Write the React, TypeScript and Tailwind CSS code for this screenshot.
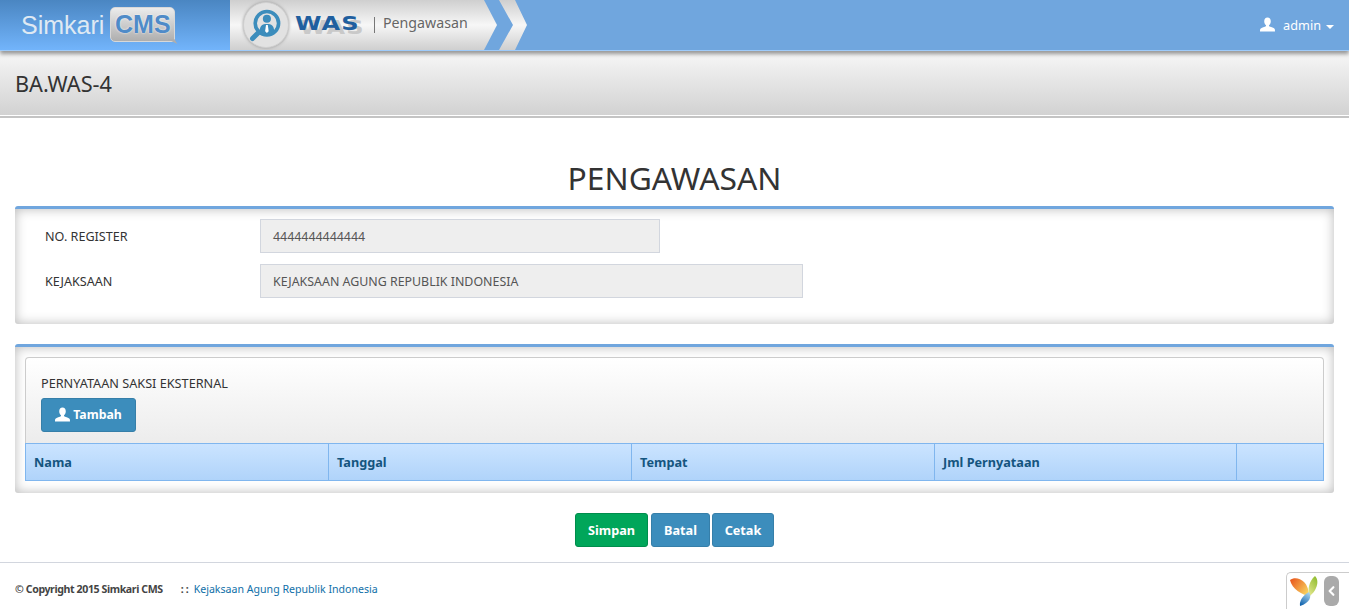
import { ChevronLeft } from 'lucide-react';

const sans = "font-['Noto_Sans','Open_Sans',sans-serif]";

function UserIcon({ className }: { className: string }) {
  return (
    <svg viewBox="0 0 16 16" className={className} fill="currentColor">
      <path d="M8 .5c2.200 0 3.500 1.600 3.500 3.900 0 1.700-.7 3.300-1.700 4.200-.3.3-.3.9 0 1.200.6.6 4.700 1.500 5.700 2.600.5.6.5 1.900.5 3.100H0c0-1.200 0-2.500.5-3.100 1-1.100 5.100-2 5.700-2.600.3-.3.3-.9 0-1.200-1-.9-1.700-2.500-1.700-4.200C4.500 2.100 5.800.5 8 .5z" />
    </svg>
  );
}

function WasBadge() {
  return (
    <div className="w-[46px] h-[46px] rounded-full bg-[#e2e2e2] border border-[#cfcfcf] shadow-[0_0_3px_#999] flex items-center justify-center ml-[13px]">
      <svg viewBox="0 0 40 40" className="w-[36px] h-[36px]">
        <circle cx="21" cy="18" r="13" fill="none" stroke="#3c8dbc" strokeWidth="4" />
        <path d="M12 28 5 35" stroke="#3c8dbc" strokeWidth="5.500" strokeLinecap="round" />
        <circle cx="21" cy="13" r="4.500" fill="#3c8dbc" />
        <path d="M13 27c0-6 3-8 8-8s8 2 8 8c-4 3-12 3-16 0z" fill="#3c8dbc" />
        <path d="M20 20h2l1 7-2 2-2-2z" fill="#fff" />
      </svg>
    </div>
  );
}

function YiiLogo() {
  return (
    <svg viewBox="0 0 28 30" className="w-[28px] h-[30px]">
      <defs>
        <linearGradient id="yo" x1="0" y1="0" x2="1" y2="0.7">
          <stop offset="0" stopColor="#e8501a" />
          <stop offset="1" stopColor="#f8d25e" />
        </linearGradient>
        <linearGradient id="yg" x1="0.8" y1="0" x2="0.2" y2="1">
          <stop offset="0" stopColor="#8fbc2e" />
          <stop offset="1" stopColor="#e2e68c" />
        </linearGradient>
        <linearGradient id="yb" x1="0.7" y1="0" x2="0.2" y2="1">
          <stop offset="0" stopColor="#a5d2ec" />
          <stop offset="1" stopColor="#0f62ad" />
        </linearGradient>
      </defs>
      <path d="M0 4c4-3 10-2 14 2 3 3 5 8 5 14C12 19 2 13 0 4z" fill="url(#yo)" />
      <path d="M25 0c3 3 3 8 1 12-1 3-4 6-6 8-3-6-1-15 5-20z" fill="url(#yg)" />
      <path d="M19 16c3 4 1 11-9 14-1-5 3-11 9-14z" fill="url(#yb)" />
    </svg>
  );
}

function Field({ label, value, inputWidth }: { label: string; value: string; inputWidth: string }) {
  return (
    <div className="flex items-center h-[34px]">
      <label className="w-[216px] pl-[1px] pt-[2px] text-[12.600px] text-[#333]">{label}</label>
      <div className={`${inputWidth} h-[34px] border border-[#d2d6de] bg-[#eee] px-3 pt-[2px] flex items-center text-[12.400px] text-[#555]`}>
        {value}
      </div>
    </div>
  );
}

function ActionButton({ label, className }: { label: string; className: string }) {
  return (
    <button className={`h-[34px] pt-[1px] rounded-[3px] border text-[12.700px] font-bold text-white ${className}`}>
      {label}
    </button>
  );
}

export default function App() {
  return (
    <div className={`${sans} h-[613px] overflow-hidden bg-white text-[#333]`}>
      <header className="h-[51px] bg-[#70a6de] border-b border-[#9ecbfa] flex relative z-10 shadow-[0_3px_4px_rgba(0,0,0,0.4)]">
        <div className="w-[230px] shrink-0 bg-gradient-to-b from-[#4a86c2] to-[#72b4fb] pl-[21px] pt-[7px] flex items-start">
          <span className="font-['Liberation_Sans',sans-serif] text-[25px] leading-[36px] text-[#dfe9f3]">Simkari</span>
          <span className="relative ml-[6px] h-[35px] w-[65px] rounded-[5px] rounded-br-none border border-[#d8d8d8] bg-gradient-to-b from-[#ececec] to-[#aeaeae] flex items-center justify-center font-['Liberation_Sans',sans-serif] font-bold text-[25px] text-[#4f8bc8] [text-shadow:0_0_2px_#fff]">
            CMS
            <span className="absolute -bottom-[3px] -right-[3px] w-[10px] h-[5px] bg-[#aeaeae] [clip-path:polygon(0_0,70%_0,100%_100%)]" />
          </span>
        </div>
        <div className="w-[267px] shrink-0 flex items-center bg-gradient-to-b from-[#cfcfcf] via-[#f7f7f7] to-[#cfcfcf] [clip-path:polygon(0_0,calc(100%-13px)_0,100%_50%,calc(100%-13px)_100%,0_100%)]">
          <WasBadge />
          <span className="w-[70px] shrink-0 ml-[6px] pb-[5px] font-['DejaVu_Sans',sans-serif] font-bold text-[20px] tracking-[1px] text-[#1f5f9f] origin-left scale-x-[1.2] [text-shadow:4px_4px_0_#c9c9c9]">WAS</span>
          <span className="ml-[9px] w-[1px] h-[16px] bg-[#777]" />
          <span className="ml-[8px] pb-[4px] text-[14.200px] text-[#666]">Pengawasan</span>
        </div>
        <div className="w-[28px] ml-[2px] shrink-0 bg-gradient-to-b from-[#cfcfcf] via-[#f7f7f7] to-[#cfcfcf] [clip-path:polygon(0_0,16px_0,100%_50%,16px_100%,0_100%,14px_50%)]" />
        <div className="ml-auto pr-[15px] flex items-center text-white text-[12.700px] pt-[1px]">
          <UserIcon className="w-[15px] h-[15px] mr-[8px] -mt-[3px]" />
          <span>admin</span>
          <span className="ml-[5px] mt-[2px] border-x-[4px] border-x-transparent border-t-[4px] border-t-white" />
        </div>
      </header>

      <div className="h-[64px] bg-gradient-to-b from-[#f7f7f7] to-[#d2d2d2] pl-[15px] flex items-center">
        <h2 className="text-[21.700px] text-[#333] pt-[2px]">BA.WAS-4</h2>
      </div>
      <div className="h-[2px] mt-[1px] bg-[#c4c4c4]" />

      <h1 className="mt-[36px] h-[52px] text-center text-[31.800px] leading-[47px] text-[#333]">PENGAWASAN</h1>

      <section className="mx-[15px] h-[118px] border-t-[3px] border-[#70a6de] rounded-[3px] bg-white shadow-[inset_0_0_12px_rgba(0,0,0,0.28)] pl-[29px] pt-[10px] flex flex-col gap-[11px]">
        <Field label="NO. REGISTER" value="4444444444444" inputWidth="w-[400px]" />
        <Field label="KEJAKSAAN" value="KEJAKSAAN AGUNG REPUBLIK INDONESIA" inputWidth="w-[543px]" />
      </section>

      <section className="mx-[15px] mt-[20px] h-[149px] border-t-[3px] border-[#70a6de] rounded-[3px] bg-white shadow-[inset_0_0_12px_rgba(0,0,0,0.28)] px-[10px] pt-[10px]">
        <div className="h-[86px] border border-[#ccc] border-b-0 rounded-t-[4px] bg-gradient-to-b from-white to-[#ececec] px-[15px] pt-[15px]">
          <p className="text-[12.700px] leading-[20px] text-[#333]">PERNYATAAN SAKSI EKSTERNAL</p>
          <button className="mt-[5px] h-[34px] w-[95px] rounded-[3px] border border-[#367fa9] bg-[#3c8dbc] flex items-center justify-center text-[12.300px] font-bold text-white">
            <UserIcon className="w-[15px] h-[15px] mr-[3px] -mt-[2px]" />
            Tambah
          </button>
        </div>
        <table className="w-full table-fixed border-collapse">
          <thead>
            <tr className="h-[37px] bg-gradient-to-b from-[#cbe4ff] to-[#afd3fa] text-left text-[12.700px] font-bold text-[#15557f]">
              <th className="w-[303px] border border-[#80b6ee] pl-[8px] pt-[2px]">Nama</th>
              <th className="w-[303px] border border-[#80b6ee] pl-[8px] pt-[2px]">Tanggal</th>
              <th className="w-[303px] border border-[#80b6ee] pl-[8px] pt-[2px]">Tempat</th>
              <th className="w-[302px] border border-[#80b6ee] pl-[8px] pt-[2px]">Jml Pernyataan</th>
              <th className="border border-[#80b6ee]"></th>
            </tr>
          </thead>
        </table>
      </section>

      <div className="mt-[20px] flex justify-center gap-[2px]">
        <ActionButton label="Simpan" className="w-[73px] mr-[1px] border-[#008d4c] bg-[#00a65a]" />
        <ActionButton label="Batal" className="w-[59px] border-[#367fa9] bg-[#3c8dbc]" />
        <ActionButton label="Cetak" className="w-[62px] border-[#367fa9] bg-[#3c8dbc]" />
      </div>

      <footer className="mt-[15px] border-t border-[#d2d6de] h-[51px] pl-[15px] flex items-start">
        <p className="mt-[17px] text-[10.600px] leading-[18px]">
          <b className="text-[#444] tracking-[-0.4px]">© Copyright 2015 Simkari CMS</b>
          <b className="text-[#444] ml-[18px] mr-[3px] tracking-[2px]">::</b>
          <span className="text-[#0f6fa8]">Kejaksaan Agung Republik Indonesia</span>
        </p>
        <div className="ml-auto mt-[9px] h-[37px] w-[63px] border-l border-t border-[#ccc] rounded-tl-[5px] bg-white flex items-start pl-[3px] pt-[3px]">
          <YiiLogo />
          <div className="ml-[6px] w-[15px] h-[30px] rounded-[6px] bg-[#aaa] flex items-center justify-center text-white">
            <ChevronLeft size={16} strokeWidth={3.5} />
          </div>
        </div>
      </footer>
    </div>
  );
}
